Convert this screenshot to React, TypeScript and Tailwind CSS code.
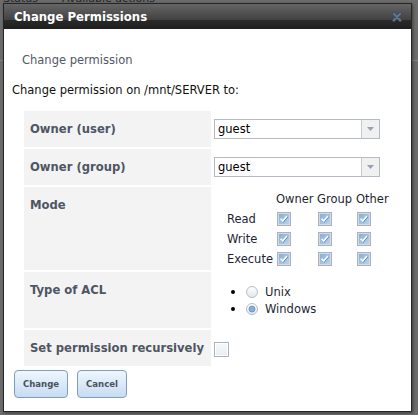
import React from "react";

function CheckedBox() {
  return (
    <svg width="14" height="14" viewBox="0 0 14 14" className="block">
      <defs>
        <linearGradient id="cbg" x1="0" y1="0" x2="1" y2="1">
          <stop offset="0" stopColor="#86afd9" />
          <stop offset="1" stopColor="#b9d3ee" />
        </linearGradient>
      </defs>
      <rect x="0.5" y="0.5" width="13" height="13" fill="#ffffff" stroke="#abb2be" />
      <rect x="1.5" y="1.5" width="11" height="11" fill="none" stroke="#d5dae2" />
      <rect x="2" y="2" width="10" height="10" fill="url(#cbg)" />
      <path d="M4.2 7.6 L6.2 9.6 L10.4 4.6" fill="none" stroke="#3f6fa3" strokeWidth="1.6" />
      <path d="M3.6 6.9 L5.8 9 L10 4" fill="none" stroke="#ffffff" strokeWidth="1.7" />
    </svg>
  );
}

function EmptyBox() {
  return (
    <svg width="15" height="15" viewBox="0 0 15 15" className="block">
      <defs>
        <linearGradient id="ebg" x1="0" y1="0" x2="0" y2="1">
          <stop offset="0" stopColor="#f7f8fa" />
          <stop offset="1" stopColor="#e9edf2" />
        </linearGradient>
      </defs>
      <rect x="0.5" y="0.5" width="14" height="14" fill="url(#ebg)" stroke="#aab1bd" />
      <rect x="1.5" y="1.5" width="12" height="12" fill="none" stroke="#ffffff" />
    </svg>
  );
}

function Radio({ checked }: { checked?: boolean }) {
  return (
    <svg width="12" height="12" viewBox="0 0 12 12" className="block">
      <defs>
        <linearGradient id="rbg" x1="0" y1="0" x2="0" y2="1">
          <stop offset="0" stopColor="#ffffff" />
          <stop offset="1" stopColor="#e3e6ea" />
        </linearGradient>
      </defs>
      <circle cx="6" cy="6" r="5.5" fill="url(#rbg)" stroke="#b7bcc6" />
      {checked && <circle cx="6" cy="6" r="3" fill="#86b0da" stroke="#5f8bb9" strokeWidth="0.8" />}
    </svg>
  );
}

function Select({ value }: { value: string }) {
  return (
    <div className="flex w-[166px] h-[20px] border border-[#b4bac4] bg-white">
      <div className="flex-1 pl-[3px] text-[11.5px] leading-[18px] text-black">{value}</div>
      <div className="w-[18px] border-l border-[#c6cbd3] bg-[#f0f0f0] flex items-center justify-center">
        <svg width="7" height="4" viewBox="0 0 7 4" className="block">
          <path d="M0 0 H7 L3.5 4 Z" fill="#98a1b4" />
        </svg>
      </div>
    </div>
  );
}

function Label({ text, h }: { text: string; h: string }) {
  return (
    <div className={`w-[187px] ${h} shrink-0 bg-[#f3f3f3] pl-[6px] pt-[11px] font-bold text-[11.6px] leading-[14px] text-[#4f5663]`}>
      {text}
    </div>
  );
}

export default function App() {
  return (
    <div className="relative w-[418px] h-[415px] overflow-hidden bg-[#6c6c6c] font-['DejaVu_Sans',sans-serif]">
      <div className="flex gap-[24px] -mt-[8px] pl-[3px] text-[11px] leading-[13px] text-[#262626]">
        <span>Status</span>
        <span>Available actions</span>
      </div>
      <div className="mt-[55px] h-px bg-[#858585]" />

      <div className="absolute left-[3px] top-[3px] w-[409px] h-[409px] border border-[#262626] bg-white shadow-[1px_1px_3px_rgba(0,0,0,0.45)] flex flex-col">
        <div className="h-[25px] shrink-0 flex items-center justify-between pl-[10px] pr-[9px] bg-[linear-gradient(to_bottom,#666666_0%,#424242_62%,#2a2a2a_64%,#1e1e1e_100%)]">
          <span className="font-bold text-[11.7px] leading-[14px] text-white">Change Permissions</span>
          <svg width="10" height="10" viewBox="0 0 10 10" className="block">
            <path d="M1.8 1.8 L8.2 8.2 M8.2 1.8 L1.8 8.2" stroke="#3c4a5c" strokeWidth="3.4" strokeLinecap="round" />
            <path d="M1.8 1.8 L8.2 8.2 M8.2 1.8 L1.8 8.2" stroke="#627690" strokeWidth="2" strokeLinecap="round" />
          </svg>
        </div>

        <div className="flex flex-col">
          <div className="mt-[24px] pl-[18px] text-[11.5px] leading-[14px] text-[#525864]">Change permission</div>
          <div className="mt-[16px] pl-[8px] text-[11.5px] leading-[14px] text-[#111]">
            Change permission on /mnt/SERVER to:
          </div>

          <div className="mt-[14px] ml-[20px] flex flex-col gap-[2px]">
            <div className="flex gap-[2px]">
              <Label text="Owner (user)" h="h-[36px]" />
              <div className="pl-[1px] pt-[8px]">
                <Select value="guest" />
              </div>
            </div>
            <div className="flex gap-[2px]">
              <Label text="Owner (group)" h="h-[36px]" />
              <div className="pl-[1px] pt-[8px]">
                <Select value="guest" />
              </div>
            </div>
            <div className="flex gap-[2px]">
              <Label text="Mode" h="h-[83px]" />
              <div className="pl-[14px] pt-[2px]">
                <div className="grid grid-cols-[49px_41px_39px_40px] auto-rows-[20px] items-center text-[11.5px] leading-[14px] text-[#241f33]">
                  <div />
                  <div>Owner</div>
                  <div>Group</div>
                  <div>Other</div>
                  <div>Read</div>
                  <div className="pl-[1px]"><CheckedBox /></div>
                  <div className="pl-[1px]"><CheckedBox /></div>
                  <div className="pl-[1px]"><CheckedBox /></div>
                  <div>Write</div>
                  <div className="pl-[1px]"><CheckedBox /></div>
                  <div className="pl-[1px]"><CheckedBox /></div>
                  <div className="pl-[1px]"><CheckedBox /></div>
                  <div>Execute</div>
                  <div className="pl-[1px]"><CheckedBox /></div>
                  <div className="pl-[1px]"><CheckedBox /></div>
                  <div className="pl-[1px]"><CheckedBox /></div>
                </div>
              </div>
            </div>
            <div className="flex gap-[2px]">
              <Label text="Type of ACL" h="h-[56px]" />
              <div className="pt-[11px] flex flex-col text-[11.5px] leading-[14px] text-[#241f33]">
                <div className="h-[17px] flex items-center">
                  <div className="ml-[18px] w-[4px] h-[4px] rounded-full bg-black" />
                  <div className="ml-[11px]"><Radio /></div>
                  <span className="ml-[7px]">Unix</span>
                </div>
                <div className="h-[17px] flex items-center">
                  <div className="ml-[18px] w-[4px] h-[4px] rounded-full bg-black" />
                  <div className="ml-[11px]"><Radio checked /></div>
                  <span className="ml-[7px]">Windows</span>
                </div>
              </div>
            </div>
            <div className="flex gap-[2px]">
              <Label text="Set permission recursively" h="h-[36px]" />
              <div className="pl-[1px] pt-[12px]">
                <EmptyBox />
              </div>
            </div>
          </div>

          <div className="mt-[4px] ml-[10px] flex gap-[9px] font-['DejaVu_Sans_Condensed','DejaVu_Sans',sans-serif] font-bold text-[9.5px]">
            <button className="w-[54px] h-[28px] rounded-[4px] border border-[#7f9cba] bg-[linear-gradient(to_bottom,#eef5fd_0%,#dce9f8_50%,#c7dbf2_100%)] text-[#4b505c]">
              Change
            </button>
            <button className="w-[50px] h-[28px] rounded-[4px] border border-[#7f9cba] bg-[linear-gradient(to_bottom,#eef5fd_0%,#dce9f8_50%,#c7dbf2_100%)] text-[#4b505c]">
              Cancel
            </button>
          </div>
        </div>
      </div>
    </div>
  );
}
